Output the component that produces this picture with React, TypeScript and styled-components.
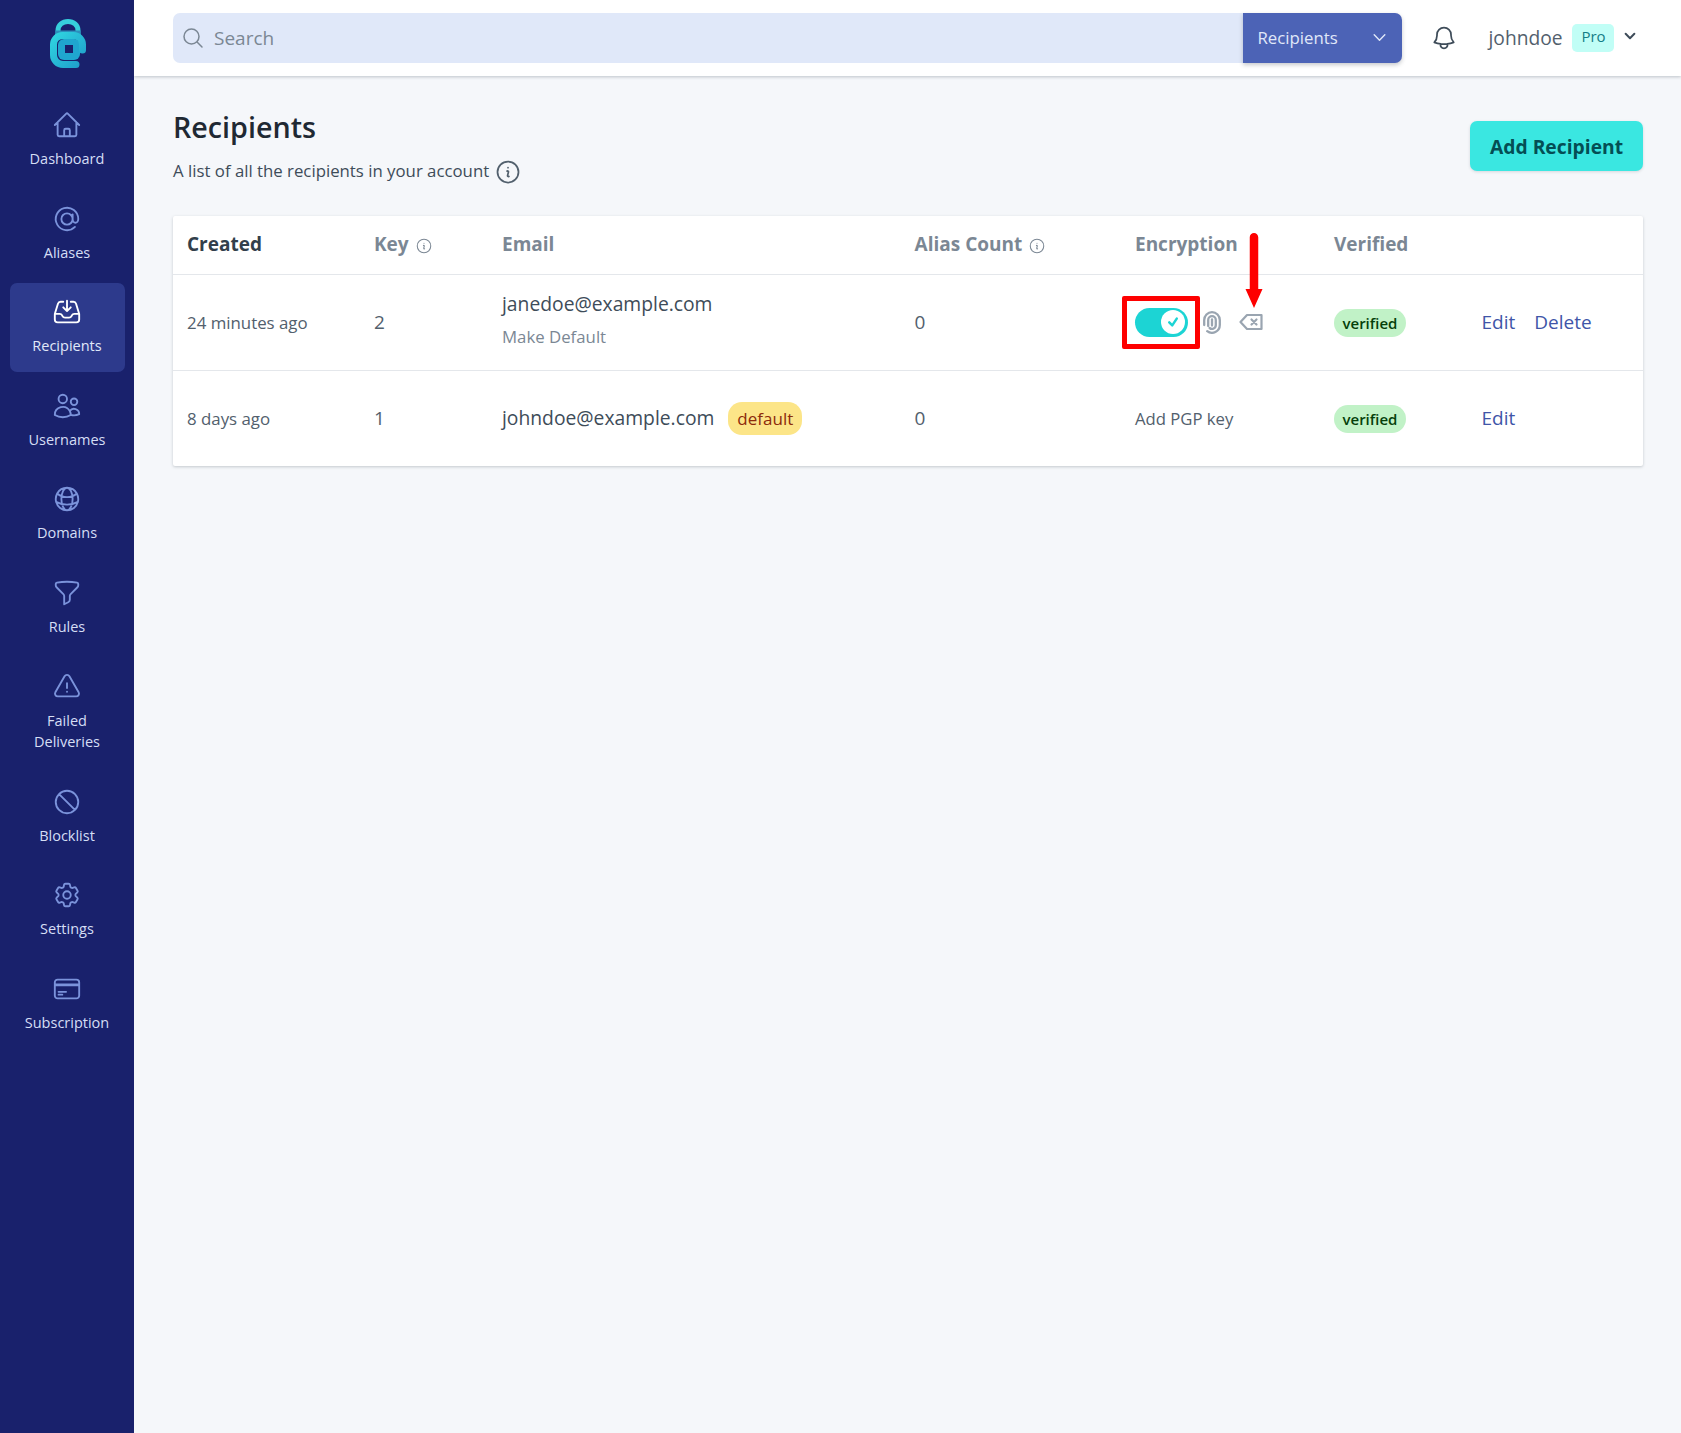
import React from "react";
import styled, { createGlobalStyle } from "styled-components";

const GlobalStyle = createGlobalStyle`
  html, body {
    margin: 0;
    padding: 0;
    background: #f5f7fa;
    font-family: "Open Sans", "Noto Sans", sans-serif;
  }
  * { box-sizing: border-box; }
`;

const navItems = [
  { label: "Dashboard", d: "M2.25 12l8.954-8.955c.44-.439 1.152-.439 1.591 0L21.75 12M4.5 9.75v10.125c0 .621.504 1.125 1.125 1.125H9.75v-4.875c0-.621.504-1.125 1.125-1.125h2.25c.621 0 1.125.504 1.125 1.125V21h4.125c.621 0 1.125-.504 1.125-1.125V9.75M8.25 21h8.25" },
  { label: "Aliases", d: "M16.5 12a4.5 4.5 0 11-9 0 4.5 4.5 0 019 0zm0 0c0 1.657 1.007 3 2.25 3S21 13.657 21 12a9 9 0 10-2.636 6.364M16.5 12V8.25" },
  { label: "Recipients", active: true, d: "M9 3.75H6.912a2.25 2.25 0 00-2.15 1.588L2.35 13.177a2.25 2.25 0 00-.1.661V18a2.25 2.25 0 002.25 2.25h15A2.25 2.25 0 0021.75 18v-4.162c0-.224-.034-.447-.1-.661L19.24 5.338a2.25 2.25 0 00-2.15-1.588H15M2.25 13.5h3.86a2.25 2.25 0 012.012 1.244l.256.512a2.25 2.25 0 002.013 1.244h3.218a2.25 2.25 0 002.013-1.244l.256-.512a2.25 2.25 0 012.013-1.244h3.859M12 3v8.25m0 0l-3-3m3 3l3-3" },
  { label: "Usernames", d: "M15 19.128a9.38 9.38 0 002.625.372 9.337 9.337 0 004.121-.952 4.125 4.125 0 00-7.533-2.493M15 19.128v-.003c0-1.113-.285-2.16-.786-3.07M15 19.128v.106A12.318 12.318 0 018.624 21c-2.331 0-4.512-.645-6.374-1.766l-.001-.109a6.375 6.375 0 0111.964-3.07M12 6.375a3.375 3.375 0 11-6.75 0 3.375 3.375 0 016.75 0zm8.25 2.25a2.625 2.625 0 11-5.25 0 2.625 2.625 0 015.25 0z" },
  { label: "Domains", d: "M12 21a9.004 9.004 0 008.716-6.747M12 21a9.004 9.004 0 01-8.716-6.747M12 21c2.485 0 4.5-4.03 4.5-9S14.485 3 12 3m0 18c-2.485 0-4.5-4.03-4.5-9S9.515 3 12 3m0 0a8.997 8.997 0 017.843 4.582M12 3a8.997 8.997 0 00-7.843 4.582m15.686 0A11.953 11.953 0 0112 10.5c-2.998 0-5.74-1.1-7.843-2.918m15.686 0A8.959 8.959 0 0121 12c0 .778-.099 1.533-.284 2.253m0 0A17.919 17.919 0 0112 16.5c-3.162 0-6.133-.815-8.716-2.247m0 0A9.015 9.015 0 013 12c0-1.605.42-3.113 1.157-4.418" },
  { label: "Rules", d: "M12 3c2.755 0 5.455.232 8.083.678.533.09.917.556.917 1.096v1.044a2.25 2.25 0 01-.659 1.591l-5.432 5.432a2.25 2.25 0 00-.659 1.591v2.927a2.25 2.25 0 01-1.244 2.013L9.75 21v-6.568a2.25 2.25 0 00-.659-1.591L3.659 7.409A2.25 2.25 0 013 5.818V4.774c0-.54.384-1.006.917-1.096A48.32 48.32 0 0112 3z" },
  { label: "Failed Deliveries", d: "M12 9v3.75m-9.303 3.376c-.866 1.5.217 3.374 1.948 3.374h14.71c1.73 0 2.813-1.874 1.948-3.374L13.949 3.378c-.866-1.5-3.032-1.5-3.898 0L2.697 16.126zM12 15.75h.007v.008H12v-.008z" },
  { label: "Blocklist", d: "M18.364 18.364A9 9 0 005.636 5.636m12.728 12.728A9 9 0 015.636 5.636m12.728 12.728L5.636 5.636" },
  { label: "Settings", d: "M9.594 3.94c.09-.542.56-.94 1.11-.94h2.593c.55 0 1.02.398 1.11.94l.213 1.281c.063.374.313.686.645.87.074.04.147.083.22.127.324.196.72.257 1.075.124l1.217-.456a1.125 1.125 0 011.37.49l1.296 2.247a1.125 1.125 0 01-.26 1.431l-1.003.827c-.293.24-.438.613-.431.992a6.759 6.759 0 010 .255c-.007.378.138.75.43.99l1.005.828c.424.35.534.954.26 1.43l-1.298 2.247a1.125 1.125 0 01-1.369.491l-1.217-.456c-.355-.133-.75-.072-1.076.124a6.57 6.57 0 01-.22.128c-.331.183-.581.495-.644.869l-.213 1.28c-.09.543-.56.941-1.11.941h-2.594c-.55 0-1.02-.398-1.11-.94l-.213-1.281c-.062-.374-.312-.686-.644-.87a6.52 6.52 0 01-.22-.127c-.325-.196-.72-.257-1.076-.124l-1.217.456a1.125 1.125 0 01-1.369-.49l-1.297-2.247a1.125 1.125 0 01.26-1.431l1.004-.827c.292-.24.437-.613.43-.992a6.932 6.932 0 010-.255c.007-.378-.138-.75-.43-.99l-1.004-.828a1.125 1.125 0 01-.26-1.43l1.297-2.247a1.125 1.125 0 011.37-.491l1.216.456c.356.133.751.072 1.076-.124.072-.044.146-.087.22-.128.332-.183.582-.495.644-.869l.214-1.281zM15 12a3 3 0 11-6 0 3 3 0 016 0z" },
  { label: "Subscription", d: "M2.25 8.25h19.5M2.25 9h19.5m-16.5 5.25h6m-6 2.25h3m-3.75 3h15a2.25 2.25 0 002.25-2.25V6.75A2.25 2.25 0 0019.5 4.5h-15a2.25 2.25 0 00-2.25 2.25v10.5A2.25 2.25 0 004.5 19.5z" },
];

const INFO = "M11.25 11.25l.041-.02a.75.75 0 011.063.852l-.708 2.836a.75.75 0 001.063.853l.041-.021M21 12a9 9 0 11-18 0 9 9 0 0118 0zm-9-3.75h.008v.008H12V8.25z";
const CHEVRON = "M19.5 8.25l-7.5 7.5-7.5-7.5";

const Outline = ({ d, size, width = 1.5 }: { d: string; size: number; width?: number }) => (
  <svg width={size} height={size} viewBox="0 0 24 24" fill="none" stroke="currentColor" strokeWidth={width} strokeLinecap="round" strokeLinejoin="round">
    <path d={d} />
  </svg>
);

const Logo = () => (
  <svg width="36" height="50" viewBox="0 0 36 50">
    <defs>
      <linearGradient id="logoGrad" x1="0" y1="0" x2="1" y2="1">
        <stop offset="0" stopColor="#2fd3e0" />
        <stop offset="1" stopColor="#1f9fcb" />
      </linearGradient>
    </defs>
    <path d="M8 17V11.5C8 6 12.5 2.5 18 2.5S28 6 28 11.5V17" fill="none" stroke="#36cfdc" strokeWidth="5" />
    <path d="M8 17V14H28V17" fill="none" stroke="#2b8fbc" strokeWidth="5" />
    <rect x="8" y="20" width="22" height="21" rx="6" fill="#1fa6cf" />
    <path d="M26 45.5H13A9.5 9.5 0 013.5 36V25.5A9 9 0 0112.5 16.5H23.5A9 9 0 0132.5 25.5V31" fill="none" stroke="url(#logoGrad)" strokeWidth="7" strokeLinecap="round" />
    <rect x="15" y="26" width="8" height="8" fill="#19216c" />
  </svg>
);

const Fingerprint = () => (
  <svg width="18" height="23" viewBox="0 0 18 23" fill="none" stroke="#9aa5b1" strokeWidth="2.3" strokeLinecap="round">
    <path d="M1.2 14V9a7.8 7.8 0 0115.6 0v5a7.800 7.800 0 01-12.600 6.100" />
    <path d="M5.2 15V9a3.800 3.800 0 017.600 0v5a3.800 3.800 0 01-6.200 3" />
    <path d="M9 8.500v6" />
  </svg>
);

const Backspace = () => (
  <svg width="24" height="18" viewBox="0 0 24 18" fill="none" stroke="#9aa5b1" strokeWidth="2.2" strokeLinejoin="round" strokeLinecap="round">
    <path d="M22.5 2H8L1.5 9 8 16h14.5z" />
    <path d="M12.5 6.5l5 5M17.5 6.5l-5 5" />
  </svg>
);

const Page = styled.div`
  display: flex;
  min-height: 1433px;
`;

const Sidebar = styled.nav`
  flex: 0 0 134px;
  background: #19216c;
  padding: 19px 9px 0 10px;
  display: flex;
  flex-direction: column;
`;

const LogoBox = styled.div`
  display: flex;
  justify-content: center;
  height: 71px;
  margin-bottom: 6px;
`;

const NavItem = styled.div<{ $active?: boolean }>`
  display: flex;
  flex-direction: column;
  align-items: center;
  padding: 14px 7px 15.5px 6px;
  margin-bottom: 4.6px;
  border-radius: 7px;
  background: ${(p) => (p.$active ? "#2d3a8c" : "transparent")};
  color: ${(p) => (p.$active ? "#ffffff" : "#7b93db")};
`;

const NavLabel = styled.span<{ $active?: boolean }>`
  margin-top: 8px;
  font-size: 14.5px;
  line-height: 21.5px;
  text-align: center;
  color: ${(p) => (p.$active ? "#e0e8f9" : "#d5def5")};
`;

const Main = styled.div`
  flex: 1;
  display: flex;
  flex-direction: column;
  min-width: 0;
`;

const Header = styled.header`
  height: 76px;
  background: #fff;
  box-shadow: 0 1px 3px rgba(50, 63, 75, 0.28);
  padding: 13px 38px 0 39px;
  display: flex;
  align-items: flex-start;
`;

const SearchBox = styled.div`
  flex: 1;
  height: 50px;
  background: #e0e8f9;
  border-radius: 7px 0 0 7px;
  display: flex;
  align-items: center;
  padding: 0 0 1px 8px;
  color: #7b8794;
  font-size: 19px;
`;

const SearchIcon = styled.span`
  display: flex;
  margin: 1px 9px 0 0;
`;

const SearchSelect = styled.div`
  flex: 0 0 159px;
  height: 50px;
  background: #4c63b6;
  border-radius: 0 7px 7px 0;
  box-shadow: 0 2px 4px rgba(31, 41, 51, 0.25);
  color: #e0e8f9;
  font-size: 16.8px;
  display: flex;
  align-items: center;
  justify-content: space-between;
  padding: 0 14px 2px 15px;
`;

const UserArea = styled.div`
  flex: 0 0 241.5px;
  height: 50px;
  display: flex;
  align-items: center;
  padding-left: 28px;
  color: #3e4c59;
`;

const UserName = styled.span`
  margin-left: 31px;
  padding-bottom: 2px;
  font-size: 19.2px;
  color: #52606d;
`;

const ProBadge = styled.span`
  margin-left: 10px;
  width: 42px;
  height: 28px;
  border-radius: 5px;
  background: #c1fef6;
  color: #147d87;
  font-size: 15px;
  padding-bottom: 4px;
  display: flex;
  align-items: center;
  justify-content: center;
`;

const UserChevron = styled.span`
  display: flex;
  margin-left: 9px;
  position: relative;
  top: -2px;
`;

const Content = styled.main`
  padding: 0 38px 0 39px;
`;

const TitleRow = styled.div`
  display: flex;
  justify-content: space-between;
  align-items: flex-start;
  height: 140px;
`;

const TitleBlock = styled.div`
  padding-top: 31px;
`;

const Title = styled.h1`
  margin: 0;
  font-size: 28.7px;
  line-height: 40px;
  font-weight: 600;
  color: #1f2933;
`;

const Subtitle = styled.p`
  margin: 9px 0 0;
  font-size: 16.8px;
  line-height: 24px;
  color: #3e4c59;
  display: flex;
  align-items: center;
`;

const SubtitleInfo = styled.span`
  display: flex;
  margin: 2px 0 0 5px;
  color: #52606d;
`;

const AddButton = styled.button`
  margin-top: 45px;
  width: 173px;
  height: 50px;
  border: 0;
  border-radius: 7px;
  padding: 0;
  background: #3ae7e1;
  color: #044e54;
  font-family: inherit;
  font-weight: 700;
  font-size: 19.3px;
  box-shadow: 0 1px 3px rgba(31, 41, 51, 0.15);
`;

const Card = styled.section`
  position: relative;
  background: #fff;
  border-radius: 2px;
  box-shadow: 0 1px 3px rgba(50, 63, 75, 0.25);
`;

const Row = styled.div<{ $head?: boolean }>`
  display: grid;
  grid-template-columns: 187px 128px 412.6px 220.4px 199px 147.5px 1fr;
  align-items: center;
  padding-left: 14px;
  height: ${(p) => (p.$head ? "58px" : "96px")};
  border-top: ${(p) => (p.$head ? "none" : "1px solid #e4e7eb")};
  padding-bottom: ${(p) => (p.$head ? "2px" : "1px")};
`;

const HeadCell = styled.div<{ $dark?: boolean }>`
  display: flex;
  align-items: center;
  font-size: 19px;
  font-weight: 700;
  color: ${(p) => (p.$dark ? "#323f4b" : "#7b8794")};
`;

const HeadInfo = styled.span`
  display: flex;
  margin-left: 6px;
  margin-top: 3px;
  color: #7b8794;
`;

const DateCell = styled.div`
  font-size: 16.85px;
  color: #52606d;
`;

const KeyCell = styled.div`
  font-size: 19px;
  color: #52606d;
`;

const EmailCell = styled.div`
  display: flex;
  flex-direction: column;
  align-items: flex-start;
  margin-top: -4px;
`;

const EmailLine = styled.div`
  display: flex;
  align-items: center;
`;

const Email = styled.span`
  font-size: 19.3px;
  line-height: 26px;
  color: #3e4c59;
`;

const MakeDefault = styled.span`
  margin-top: 8px;
  font-size: 16.8px;
  line-height: 24px;
  color: #7b8794;
`;

const Pill = styled.span<{ $bg: string; $fg: string }>`
  display: inline-flex;
  align-items: center;
  border-radius: 14px;
  background: ${(p) => p.$bg};
  color: ${(p) => p.$fg};
`;

const DefaultPill = styled(Pill)`
  margin-left: 14px;
  height: 33px;
  padding: 0 9px;
  font-size: 17px;
`;

const VerifiedCell = styled.div`
  display: flex;
  margin-top: 2px;
`;

const VerifiedPill = styled(Pill)`
  height: 28px;
  padding: 0 8.5px;
  font-size: 15px;
  font-weight: 600;
`;

const EncryptCell = styled.div`
  display: flex;
  align-items: center;
`;

const Toggle = styled.div`
  position: relative;
  width: 53px;
  height: 29px;
  border-radius: 15px;
  background: #1cd4d4;
  display: flex;
  align-items: center;
  justify-content: flex-end;
  padding-right: 3px;

  &::after {
    content: "";
    position: absolute;
    left: -13px;
    right: -12px;
    top: -12px;
    bottom: -12px;
    border: 5px solid #fe0000;
    border-radius: 2px;
  }
`;

const Knob = styled.span`
  width: 24px;
  height: 24px;
  border-radius: 50%;
  background: #fff;
  color: #1cd4d4;
  display: flex;
  align-items: center;
  justify-content: center;
`;

const FingerBox = styled.span`
  display: flex;
  margin-left: 15px;
`;

const BackspaceBox = styled.span`
  display: flex;
  margin-left: 18px;
`;

const RedArrow = styled.svg`
  position: absolute;
  left: 1072px;
  top: 17px;
`;

const AddKey = styled.span`
  font-size: 16.7px;
  color: #52606d;
`;

const Actions = styled.div`
  display: flex;
  gap: 19px;
`;

const ActionLink = styled.span`
  font-size: 19px;
  color: #4055a8;
`;

export default function App() {
  return (
    <Page>
      <GlobalStyle />
      <Sidebar>
        <LogoBox>
          <Logo />
        </LogoBox>
        {navItems.map((item) => (
          <NavItem key={item.label} $active={item.active}>
            <Outline d={item.d} size={30} width={1.5} />
            <NavLabel $active={item.active}>{item.label}</NavLabel>
          </NavItem>
        ))}
      </Sidebar>
      <Main>
        <Header>
          <SearchBox>
            <SearchIcon>
              <Outline d="M21 21l-5.197-5.197m0 0A7.5 7.5 0 105.196 5.196a7.5 7.5 0 0010.607 10.607z" size={24} />
            </SearchIcon>
            Search
          </SearchBox>
          <SearchSelect>
            Recipients
            <Outline d={CHEVRON} size={17} width={2} />
          </SearchSelect>
          <UserArea>
            <Outline d="M14.857 17.082a23.848 23.848 0 005.454-1.31A8.967 8.967 0 0118 9.75v-.7V9A6 6 0 006 9v.75a8.967 8.967 0 01-2.312 6.022c1.733.64 3.56 1.085 5.455 1.31m5.714 0a24.255 24.255 0 01-5.714 0m5.714 0a3 3 0 11-5.714 0" size={28} />
            <UserName>johndoe</UserName>
            <ProBadge>Pro</ProBadge>
            <UserChevron>
              <Outline d={CHEVRON} size={14} width={3.4} />
            </UserChevron>
          </UserArea>
        </Header>
        <Content>
          <TitleRow>
            <TitleBlock>
              <Title>Recipients</Title>
              <Subtitle>
                A list of all the recipients in your account
                <SubtitleInfo>
                  <Outline d={INFO} size={28} width={1.5} />
                </SubtitleInfo>
              </Subtitle>
            </TitleBlock>
            <AddButton>Add Recipient</AddButton>
          </TitleRow>
          <Card>
            <Row $head>
              <HeadCell $dark>Created</HeadCell>
              <HeadCell>
                Key
                <HeadInfo>
                  <Outline d={INFO} size={18} width={1.4} />
                </HeadInfo>
              </HeadCell>
              <HeadCell>Email</HeadCell>
              <HeadCell>
                Alias Count
                <HeadInfo>
                  <Outline d={INFO} size={18} width={1.4} />
                </HeadInfo>
              </HeadCell>
              <HeadCell>Encryption</HeadCell>
              <HeadCell>Verified</HeadCell>
              <div />
            </Row>
            <Row>
              <DateCell>24 minutes ago</DateCell>
              <KeyCell>2</KeyCell>
              <EmailCell>
                <Email>janedoe@example.com</Email>
                <MakeDefault>Make Default</MakeDefault>
              </EmailCell>
              <KeyCell>0</KeyCell>
              <EncryptCell>
                <Toggle>
                  <Knob>
                    <Outline d="M4.5 12.75l6 6 9-13.5" size={12} width={5} />
                  </Knob>
                </Toggle>
                <FingerBox>
                  <Fingerprint />
                </FingerBox>
                <BackspaceBox>
                  <Backspace />
                </BackspaceBox>
              </EncryptCell>
              <VerifiedCell>
                <VerifiedPill $bg="#c1f2c7" $fg="#05400a">verified</VerifiedPill>
              </VerifiedCell>
              <Actions>
                <ActionLink>Edit</ActionLink>
                <ActionLink>Delete</ActionLink>
              </Actions>
            </Row>
            <Row>
              <DateCell>8 days ago</DateCell>
              <KeyCell>1</KeyCell>
              <EmailLine>
                <Email>johndoe@example.com</Email>
                <DefaultPill $bg="#fce588" $fg="#8d2b0b">default</DefaultPill>
              </EmailLine>
              <KeyCell>0</KeyCell>
              <AddKey>Add PGP key</AddKey>
              <VerifiedCell>
                <VerifiedPill $bg="#c1f2c7" $fg="#05400a">verified</VerifiedPill>
              </VerifiedCell>
              <Actions>
                <ActionLink>Edit</ActionLink>
              </Actions>
            </Row>
            <RedArrow width="18" height="75" viewBox="0 0 18 75">
              <path d="M4.75 4.25a4.25 4.25 0 018.5 0V56H17.5L9 75 0.5 56H4.75z" fill="#fe0000" />
            </RedArrow>
          </Card>
        </Content>
      </Main>
    </Page>
  );
}
